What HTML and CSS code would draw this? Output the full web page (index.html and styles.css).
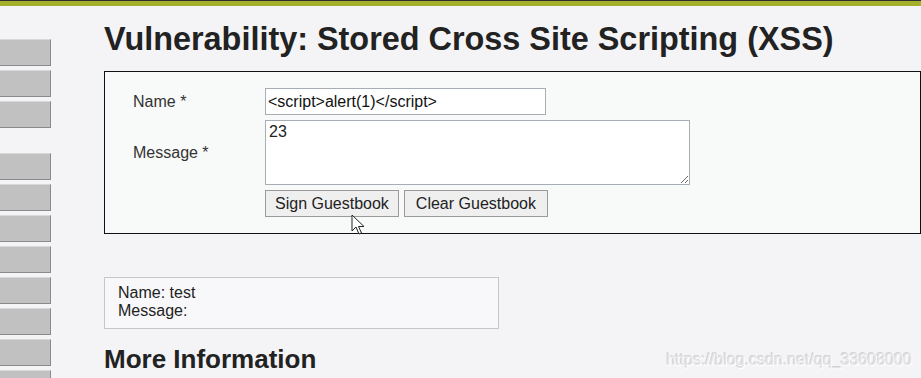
FILE: index.html
```html
<html>
<head>
    <title>Vulnerability: Stored Cross Site Scripting (XSS)</title>
    <meta name="viewport" content="width=device-width, initial-scale=1" />
    <link rel="stylesheet" href="styles.css">
</head>
<body>
<div class="topbar"></div>

<div class="page">
    <ul class="menu">
        <li class="menu-item"></li>
        <li class="menu-item"></li>
        <li class="menu-item menu-item-last"></li>
        <li class="menu-item"></li>
        <li class="menu-item"></li>
        <li class="menu-item"></li>
        <li class="menu-item"></li>
        <li class="menu-item"></li>
        <li class="menu-item"></li>
        <li class="menu-item"></li>
        <li class="menu-item"></li>
    </ul>

    <div class="body-main">
        <h1 class="title">Vulnerability: Stored Cross Site Scripting (XSS)</h1>

        <div class="vulnerable-code">
            <form class="guestbook">
                <label class="field-label" for="txtName">Name *</label>
                <input class="field-name" id="txtName" type="text" value="<script>alert(1)</script>" />

                <label class="field-label" for="mtxMessage">Message *</label>
                <textarea class="field-message" id="mtxMessage">23</textarea>

                <span></span>
                <div class="actions">
                    <button type="button" class="btn">Sign Guestbook</button>
                    <button type="button" class="btn">Clear Guestbook</button>
                </div>
            </form>
            <!-- mouse pointer captured in the screenshot -->
            <svg class="pointer" width="14" height="22" viewBox="0 0 14 22">
                <path d="M1 1 L1 17 L5 13 L8 20 L10.5 19 L7.5 12.5 L13 12.5 Z" fill="#fff" stroke="#222" stroke-width="1"/>
            </svg>
        </div>

        <div class="entry">
            Name: test<br />
            Message:
        </div>

        <h2 class="subtitle">More Information</h2>
    </div>
</div>

<div class="watermark">https://blog.csdn.net/qq_33608000</div>
</body>
</html>
```

FILE: styles.css
```css
body {
    margin: 0;
    height: 100vh;
    background: #f4f4f6;
    font-family: "Liberation Sans", Arial, sans-serif;
    color: #222;
    overflow: hidden;
}

div.topbar {
    /* dark line and olive strip of the header */
    height: 5px;
    border-top: 1px solid #2e2e2e;
    background: #a5b02a;
}

div.page {
    display: flex;
}

ul.menu {
    list-style: none;
    margin: 33px 0 0 0;
    padding: 0;
    width: 51px;
    flex-shrink: 0;
}

ul.menu li.menu-item {
    height: 25px;
    margin-bottom: 4px;
    background: #c1c1c1;
    border: 1px solid #8a8a8a;
    border-top-color: #d8d8d8;
    border-left: 0;
}

ul.menu li.menu-item-last {
    margin-bottom: 25px;
}

div.body-main {
    margin-left: 53px;
    flex: 1;
}

h1.title {
    font-size: 32.4px;
    font-weight: bold;
    margin: 15px 0 13px 0;
    color: #222;
    white-space: nowrap;
}

div.vulnerable-code {
    position: relative;
    border: 1px solid #111;
    background: #f8f9f9;
    padding: 16px 0 16px 28px;
}

form.guestbook {
    margin: 0;
    display: grid;
    grid-template-columns: 132px auto;
    row-gap: 5px;
    justify-content: start;
    align-items: center;
}

label.field-label {
    font-size: 16px;
    color: #333;
}

input.field-name {
    width: 281px;
    height: 27px;
    box-sizing: border-box;
    border: 1px solid #a6adb5;
    background: #fff;
    font: 16px "Liberation Sans", Arial, sans-serif;
    color: #111;
    padding: 0 2px;
}

textarea.field-message {
    width: 425px;
    height: 65px;
    box-sizing: border-box;
    border: 1px solid #a6adb5;
    background: #fff;
    font: 16px "Liberation Sans", Arial, sans-serif;
    color: #222;
    padding: 2px 3px;
    display: block;
}

div.actions {
    display: flex;
    gap: 5px;
}

button.btn {
    height: 27px;
    padding: 0 9px;
    border: 1px solid #9a9a9a;
    background: #efefef;
    font: 16px "Liberation Sans", Arial, sans-serif;
    color: #222;
}

button.btn + button.btn {
    padding: 0 11px;
}

svg.pointer {
    position: absolute;
    left: 246px;
    top: 142px;
}

div.entry {
    margin-top: 43px;
    width: 380px;
    border: 1px solid #c6c6c6;
    background: #f8f8fa;
    padding: 6px 0 8px 13px;
    font-size: 16px;
    line-height: 18px;
    color: #222;
}

h2.subtitle {
    font-size: 26px;
    font-weight: bold;
    margin: 15px 0 0 0;
    color: #222;
}

div.watermark {
    /* blog watermark over the bottom right corner */
    position: absolute;
    right: 9px;
    bottom: 9px;
    font-size: 16px;
    color: #e4e4e6;
    text-shadow: 1px 1px 0 #fff, -1px -1px 0 #d0d0d2;
}
```
